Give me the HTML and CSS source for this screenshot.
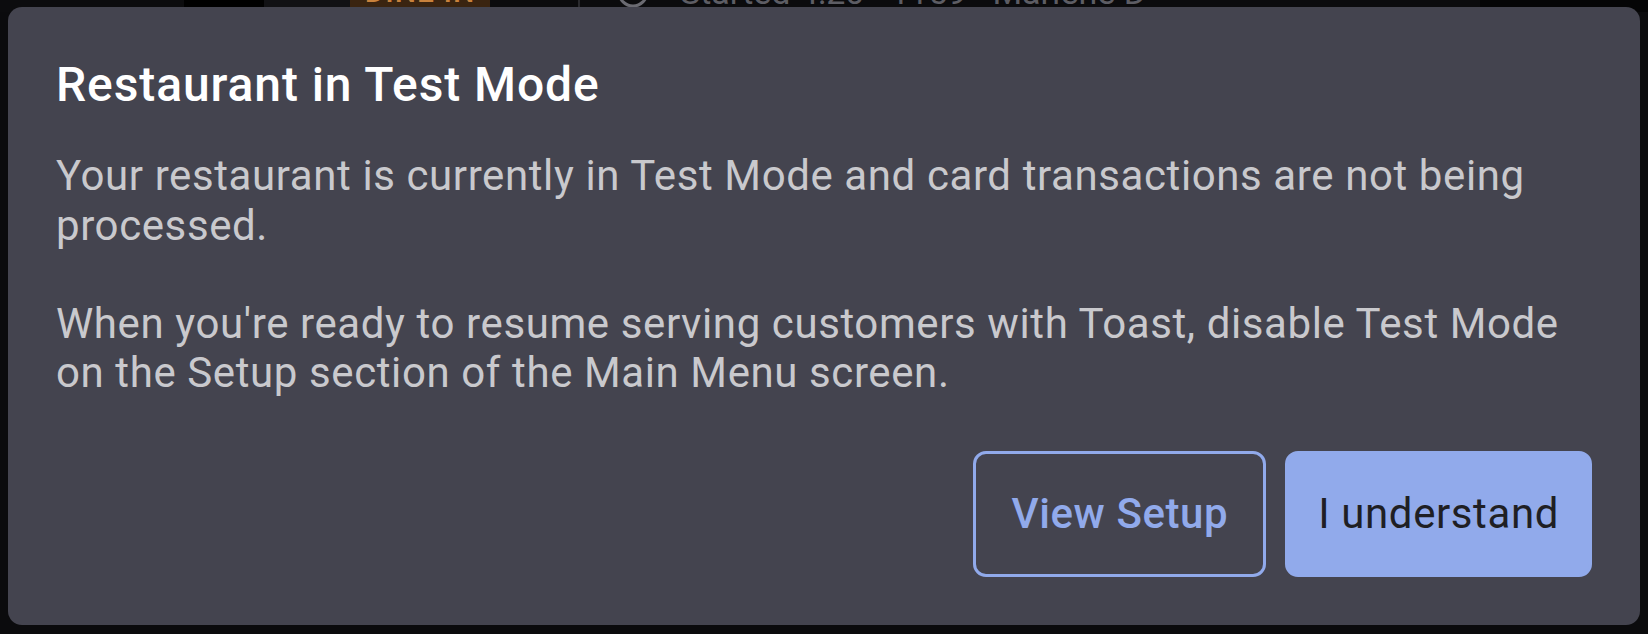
FILE: index.html
```html
<!DOCTYPE html>
<html lang="en">
<head>
<meta charset="utf-8">
<title>Restaurant in Test Mode</title>
<link rel="stylesheet" href="styles.css">
</head>
<body>
<div class="backdrop">
  <div class="topbar">
    <div class="seg seg-a"></div>
    <div class="seg seg-b"></div>
    <div class="seg seg-c"></div>
    <div class="seg dine">DINE IN</div>
    <div class="seg seg-d"></div>
    <div class="seg started">
      <svg class="ico" width="34" height="34" viewBox="0 0 34 34" aria-hidden="true"><circle cx="17" cy="17" r="14" fill="none" stroke="#6b6b72" stroke-width="3"/><path d="M10 17l5 5 9-10" fill="none" stroke="#6b6b72" stroke-width="3"/></svg>
      <span>Started 4:20 · 1159 · Marlene D</span>
    </div>
    <div class="seg seg-e"></div>
  </div>
</div>
<div class="dialog" role="dialog" aria-labelledby="dlg-title">
  <h1 class="dialog-title" id="dlg-title">Restaurant in Test Mode</h1>
  <div class="dialog-body">
    <p>Your restaurant is currently in Test Mode and card transactions are not being processed.</p>
    <p>When you're ready to resume serving customers with Toast, disable Test Mode on the Setup section of the Main Menu screen.</p>
  </div>
  <div class="dialog-actions">
    <button class="btn btn-outline">View Setup</button>
    <button class="btn btn-primary">I understand</button>
  </div>
</div>
</body>
</html>
```
FILE: styles.css
```css
* { box-sizing: border-box; }
html, body {
  margin: 0;
  padding: 0;
  width: 1648px;
  height: 634px;
  overflow: hidden;
  background: #0b0b0d;
  font-family: Roboto, "Noto Sans", "Liberation Sans", sans-serif;
}
.backdrop {
  position: relative;
  width: 100%;
  height: 100%;
}
.topbar {
  display: flex;
  height: 40px;
  margin-top: -28px;
  align-items: flex-end;
}
.seg { height: 40px; }
.seg-a { width: 184px; background: #0c0c0e; }
.seg-b { width: 80px; background: #000; }
.seg-c { width: 86px; background: #111114; }
.dine {
  width: 140px;
  background: #3a2410;
  color: #c9823c;
  font-size: 30px;
  font-weight: 500;
  line-height: 40px;
  text-align: center;
  letter-spacing: 1px;
}
.seg-d { width: 90px; background: #0b0b0d; border-right: 2px solid #2a2a2e; }
.started {
  width: 900px;
  padding-left: 36px;
  display: flex;
  align-items: center;
  gap: 30px;
  color: #5d5d64;
  font-size: 34px;
  line-height: 40px;
  white-space: nowrap;
}
.ico { flex: none; }
.seg-e { flex: 1; background: #050506; }

.dialog {
  position: absolute;
  left: 8px;
  top: 7px;
  width: 1632px;
  height: 618px;
  background: #44444f;
  border-radius: 14px;
  padding: 50px 48px 48px 48px;
  display: flex;
  flex-direction: column;
}
.dialog-title {
  margin: 0;
  color: #ffffff;
  font-size: 48px;
  font-weight: 500;
  line-height: 56px;
  letter-spacing: 0.9px;
}
.dialog-body {
  margin-top: 38px;
  color: #c9c9cd;
  font-size: 42px;
  line-height: 49.5px;
  letter-spacing: 0.6px;
}
.dialog-body p { margin: 0; }
.dialog-body p + p { margin-top: 48.5px; }
.dialog-actions {
  margin-top: auto;
  display: flex;
  justify-content: flex-end;
  gap: 19px;
}
.btn {
  font-family: Roboto, "Noto Sans", "Liberation Sans", sans-serif;
  font-size: 42px;
  font-weight: 500;
  line-height: 48px;
  letter-spacing: 0.6px;
  height: 126px;
  border-radius: 13px;
  border: 3px solid #91aaeb;
  cursor: pointer;
}
.btn-outline {
  padding: 0 35px;
  background: transparent;
  color: #91aaeb;
}
.btn-primary {
  padding: 0 30px;
  background: #91aaeb;
  color: #1f1f24;
  font-weight: 400;
}
```
